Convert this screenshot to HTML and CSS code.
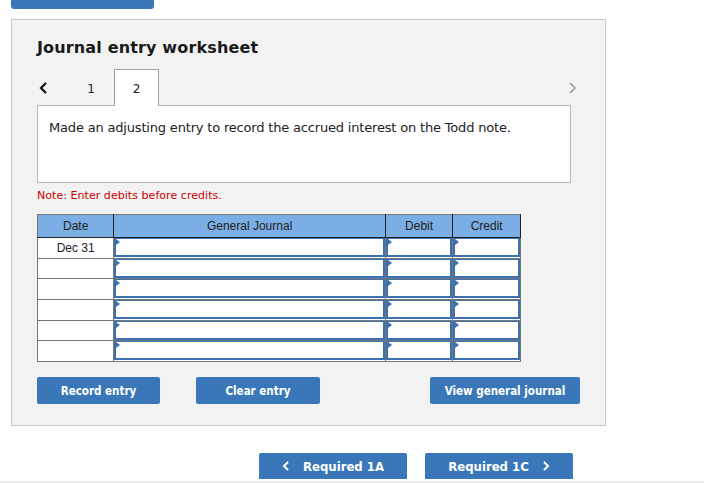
FILE: index.html
```html
<!DOCTYPE html>
<html lang="en">
<head>
    <meta charset="UTF-8">
    <title>Journal entry worksheet</title>
    <link rel="stylesheet" href="styles.css">
</head>
<body>
    <div class="top-bar"></div>

    <div class="panel">
        <h1>Journal entry worksheet</h1>

        <div class="tabs">
            <span class="arrow prev">
                <svg width="10" height="12" viewBox="0 0 10 12"><polyline points="7,1 2,6 7,11" fill="none" stroke="#111" stroke-width="2.2"/></svg>
            </span>
            <span class="tab">1</span>
            <span class="tab active">2</span>
            <span class="arrow next">
                <svg width="10" height="12" viewBox="0 0 10 12"><polyline points="2,1 7,6 2,11" fill="none" stroke="#999" stroke-width="1.6"/></svg>
            </span>
        </div>

        <div class="description">
            Made an adjusting entry to record the accrued interest on the Todd note.
        </div>

        <div class="note">Note: Enter debits before credits.</div>

        <table class="journal">
            <thead>
                <tr>
                    <th class="col-date">Date</th>
                    <th class="col-account">General Journal</th>
                    <th class="col-amount">Debit</th>
                    <th class="col-amount">Credit</th>
                </tr>
            </thead>
            <tbody id="rows"></tbody>
        </table>

        <div class="actions">
            <button class="btn record">Record entry</button>
            <button class="btn clear">Clear entry</button>
            <button class="btn view">View general journal</button>
        </div>
    </div>

    <div class="nav">
        <button class="btn nav-btn">
            <svg width="8" height="10" viewBox="0 0 8 10"><polyline points="6,1 2,5 6,9" fill="none" stroke="#fff" stroke-width="2"/></svg>
            Required 1A
        </button>
        <button class="btn nav-btn">
            Required 1C
            <svg width="8" height="10" viewBox="0 0 8 10"><polyline points="2,1 6,5 2,9" fill="none" stroke="#fff" stroke-width="2"/></svg>
        </button>
    </div>

    <script>
        const dates = ['Dec 31', '', '', '', '', ''];
        const tbody = document.getElementById('rows');
        let html = '';
        dates.forEach(date => {
            html += `
                <tr>
                    <td class="date">${date}</td>
                    <td class="cell"><div class="entry"></div></td>
                    <td class="cell"><div class="entry"></div></td>
                    <td class="cell"><div class="entry"></div></td>
                </tr>
            `;
        });
        tbody.innerHTML = html;
    </script>
</body>
</html>
```

FILE: styles.css
```css
body {
    margin: 0;
    font-family: "DejaVu Sans", Verdana, sans-serif;
    color: #222;
    background-color: white;
}
.top-bar {
    margin-left: 11px;
    width: 143px;
    height: 9px;
    background-color: #3a77b9;
    border-radius: 0 0 3px 3px;
}
.panel {
    margin: 10px 0 0 11px;
    width: 568px;
    height: 389px;
    padding: 16px 0 0 25px;
    border: 1px solid #c8c8c8;
    background-color: #f2f2f2;
}
h1 {
    margin: 0 0 11px;
    padding-top: 2px;
    font-size: 16px;
    line-height: 20px;
    font-weight: bold;
    color: #1a1a1a;
    letter-spacing: 0.15px;
}
.tabs {
    display: flex;
    align-items: stretch;
    width: 543px;
    height: 37px;
}
.arrow {
    display: flex;
    align-items: center;
}
.prev {
    width: 31px;
    padding-left: 2px;
    box-sizing: border-box;
}
.next {
    margin-left: auto;
    padding-right: 2px;
}
.tab {
    width: 46px;
    display: flex;
    align-items: center;
    justify-content: center;
    font-size: 12px;
    padding-top: 2px;
    box-sizing: border-box;
}
.tab.active {
    width: 45px;
    background-color: white;
    border: 1px solid #a0a0a0;
    border-bottom: none;
    position: relative;
    z-index: 1;
    height: 37px;
}
.description {
    width: 510px;
    height: 62px;
    margin-top: -1px;
    padding: 14px 11px 0;
    border: 1px solid #b4b4b4;
    background-color: white;
    font-size: 13px;
    line-height: 16px;
    letter-spacing: -0.18px;
}
.note {
    margin-top: 6px;
    font-size: 11px;
    line-height: 14px;
    color: #cc0000;
    letter-spacing: 0.05px;
}
.journal {
    margin-top: 11px;
    width: 484px;
    border-collapse: collapse;
    font-family: "Liberation Sans", Arial, sans-serif;
    font-size: 12px;
    border: 1px solid #777;
}
.journal th {
    height: 22px;
    padding: 0;
    background-color: #7aaee4;
    color: #222;
    font-weight: normal;
    border: 1px solid #777;
    border-bottom-color: #222;
    border-right-color: #222;
}
.col-date {
    width: 76px;
}
.col-account {
    width: 273px;
}
.col-amount {
    width: 67px;
}
.journal td {
    height: 19.7px;
    padding: 0;
    border: 1px solid #777;
    background-color: white;
}
.journal td.date {
    text-align: center;
}
.journal td.cell {
    vertical-align: top;
}
.entry {
    position: relative;
    height: 16px;
    border: 2px solid #3d70b1;
    border-top-width: 1px;
    background-color: white;
}
.entry::before {
    content: "";
    position: absolute;
    left: 0;
    top: 0;
    border-left: 4px solid #3d70b1;
    border-top: 3px solid transparent;
    border-bottom: 3px solid transparent;
}
.actions {
    display: flex;
    margin-top: 15px;
    width: 543px;
}
.btn {
    height: 27px;
    border: none;
    border-radius: 2px;
    background-color: #3a77b9;
    color: white;
    font-family: "DejaVu Sans Condensed", Tahoma, sans-serif;
    font-weight: bold;
    font-size: 11.5px;
    cursor: pointer;
    padding: 0;
}
.record {
    width: 123px;
}
.clear {
    width: 124px;
    margin-left: 36px;
}
.view {
    width: 150px;
    margin-left: 110px;
}
.nav {
    display: flex;
    gap: 18px;
    margin-top: 27px;
    padding-left: 259px;
    height: 28px;
    border-bottom: 2px solid #ececec;
    overflow: hidden;
}
.nav-btn {
    width: 148px;
    height: 26px;
    font-size: 13px;
    display: flex;
    align-items: center;
    justify-content: center;
    gap: 13px;
    border-radius: 2px 2px 0 0;
}
```
